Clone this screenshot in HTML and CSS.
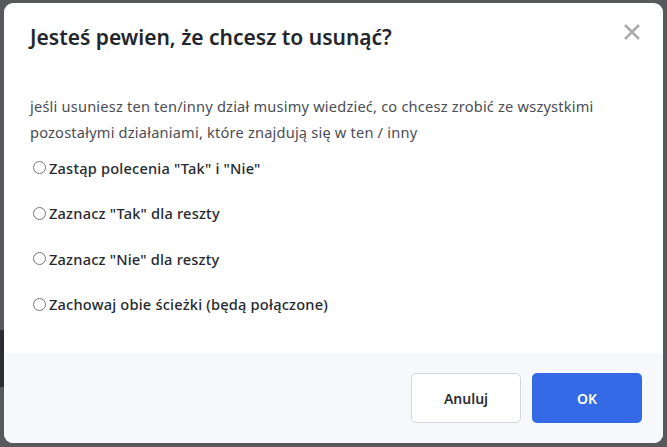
FILE: index.html
```html
<!DOCTYPE html>
<html lang="pl">
<head>
    <meta charset="UTF-8">
    <title>Usuń dział</title>
    <link rel="stylesheet" href="styles.css">
</head>
<body>
    <!-- Page behind the overlay -->
    <div class="backdrop">
        <div class="behind-bar"></div>
    </div>

    <!-- Confirm dialog -->
    <div class="modal">
        <div class="modal-head">
            <h2 class="modal-title">Jesteś pewien, że chcesz to usunąć?</h2>
            <button class="close" aria-label="Zamknij">
                <svg width="18" height="18" viewBox="0 0 18 18">
                    <path d="M2 2 L16 16 M16 2 L2 16" stroke="#acacac" stroke-width="2.6" stroke-linecap="butt"/>
                </svg>
            </button>
        </div>

        <div class="modal-body">
            <p class="intro">jeśli usuniesz ten ten/inny dział musimy wiedzieć, co chcesz zrobić ze wszystkimi pozostałymi działaniami, które znajdują się w ten / inny</p>

            <label class="option"><input type="radio" name="action"> Zastąp polecenia "Tak" i "Nie"</label>
            <label class="option"><input type="radio" name="action"> Zaznacz "Tak" dla reszty</label>
            <label class="option"><input type="radio" name="action"> Zaznacz "Nie" dla reszty</label>
            <label class="option"><input type="radio" name="action"> Zachowaj obie ścieżki (będą połączone)</label>
        </div>

        <div class="modal-foot">
            <button class="btn btn-cancel">Anuluj</button>
            <button class="btn btn-ok">OK</button>
        </div>
    </div>
</body>
</html>
```

FILE: styles.css
```css
body { margin: 0; background-color: #58595d; font-family: "Noto Sans", "Open Sans", sans-serif; overflow: hidden; }
.backdrop { position: absolute; inset: 0; }
.behind-bar { position: absolute; left: 0; top: 330px; width: 10px; height: 57px; background-color: #2b2d33; }

.modal { position: relative; width: 659px; height: 440px; margin: 3px 0 0 4px; background-color: #fff; border-radius: 9px; display: flex; flex-direction: column; overflow: hidden; }

.modal-head { display: flex; justify-content: space-between; align-items: flex-start; padding: 20px 22px 0 26px; }
.modal-title { margin: 0; font-size: 21px; line-height: 28px; font-weight: 600; color: #23262c; }
.close { border: none; background: none; padding: 0; margin-top: 0; cursor: pointer; }

.modal-body { flex: 1; padding: 0 26px; }
.intro { margin: 42px 0 0; font-size: 14.6px; line-height: 26px; letter-spacing: 0.2px; color: #4a4d54; }
.option { display: flex; align-items: center; height: 45.5px; font-size: 14.6px; font-weight: 500; letter-spacing: 0.2px; color: #25282e; }
.option input { margin: 0 3px 0 3px; width: 13px; height: 13px; }

.modal-foot { display: flex; justify-content: flex-end; gap: 11px; height: 90px; box-sizing: border-box; padding: 20px 21px 0 0; background-color: #f7f8fc; }
.btn { width: 110px; height: 50px; border-radius: 5px; font-family: inherit; font-size: 14px; font-weight: 600; cursor: pointer; }
.btn-cancel { background-color: #fff; border: 1px solid #d3d6de; color: #2b2e34; }
.btn-ok { background-color: #346ae5; border: none; color: #fff; }
```
